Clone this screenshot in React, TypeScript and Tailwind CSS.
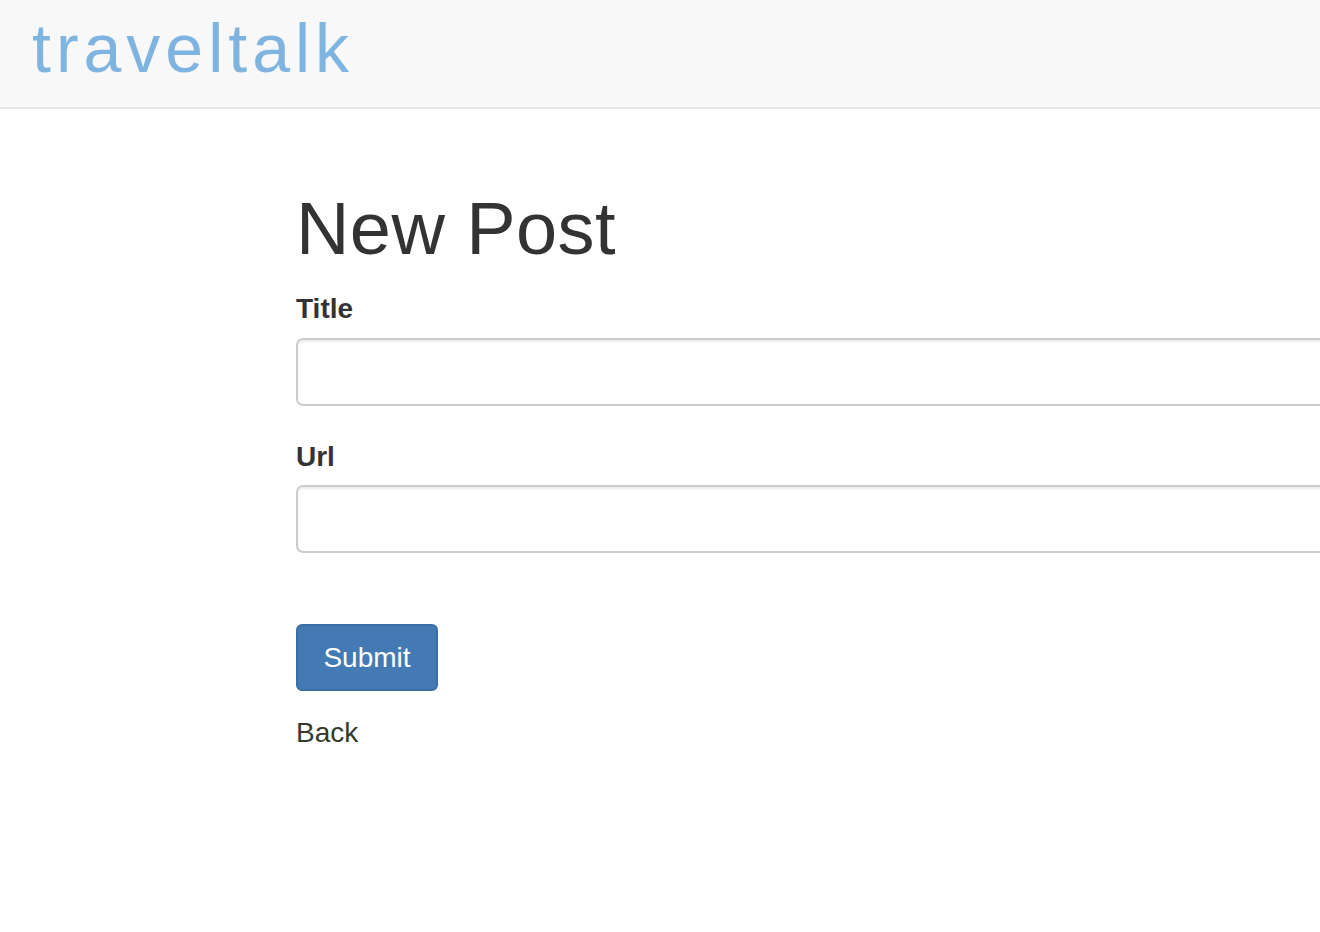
import React from "react";

export default function App() {
  return (
    <div className="min-h-[932px] bg-white overflow-hidden" style={{ fontFamily: '"Liberation Sans", Arial, sans-serif' }}>
      <header className="h-[109px] bg-[#f8f8f8] border-b-2 border-[#e7e7e7] flex items-start">
        <div className="pl-[32px] pt-[8px] text-[68px] leading-[80px] tracking-[5px] text-[#7fb4e0]">traveltalk</div>
      </header>
      <main className="pl-[296px] pt-[80px]">
        <h1 className="text-[74px] leading-[80px] font-normal text-[#333] tracking-[0.4px]">New Post</h1>
        <form className="w-[1100px]">
          <div className="mt-[20px]">
            <label className="block text-[28px] leading-[40px] font-bold text-[#333] mb-[9px]">Title</label>
            <input className="block w-full h-[68px] rounded-[7px] border-2 border-[#cccccc] bg-white shadow-[inset_0_2px_2px_rgba(0,0,0,0.075)] outline-none" />
          </div>
          <div className="mt-[31px]">
            <label className="block text-[28px] leading-[40px] font-bold text-[#333] mb-[8px]">Url</label>
            <input className="block w-full h-[68px] rounded-[7px] border-2 border-[#cccccc] bg-white shadow-[inset_0_2px_2px_rgba(0,0,0,0.075)] outline-none" />
          </div>
          <div className="mt-[71px]">
            <button type="button" className="w-[142px] h-[67px] rounded-[6px] border-2 border-[#3b6ea5] bg-[#447ab3] text-white text-[28px] leading-[40px]">Submit</button>
          </div>
        </form>
        <div className="mt-[22px]">
          <a className="text-[28px] leading-[40px] text-[#353a2b]">Back</a>
        </div>
      </main>
    </div>
  );
}
